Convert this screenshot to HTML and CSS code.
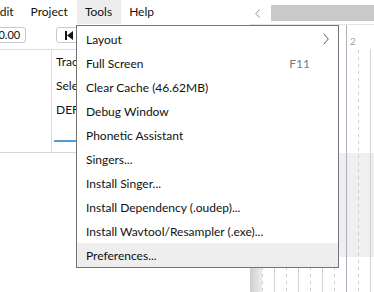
FILE: index.html
```html
<!DOCTYPE html>
<html>
<head>
<meta charset="utf-8">
<link rel="stylesheet" href="styles.css">
</head>
<body>
<div class="window">
  <div class="menubar">
    <div class="mb-items">
      <div class="mb-item first">Edit</div>
      <div class="mb-item">Project</div>
      <div class="mb-item active">Tools</div>
      <div class="mb-item">Help</div>
    </div>
    <div class="hscroll">
      <svg class="hs-arrow" width="5" height="9" viewBox="0 0 5 9"><path d="M4.5 0.5 L0.8 4.5 L4.5 8.5" fill="none" stroke="#8a8a8a" stroke-width="1"/></svg>
      <div class="hs-thumb"></div>
    </div>
  </div>
  <div class="workspace">
    <div class="headers">
      <div class="toolbar">
        <div class="time-input">00:00:00.00</div>
        <div class="tb-btn">
          <svg width="8" height="9" viewBox="0 0 8 9"><rect x="0" y="0" width="2" height="9" fill="#111"/><polygon points="8,0 8,9 2,4.5" fill="#111"/></svg>
        </div>
      </div>
      <div class="track">
        <div class="track-num"></div>
        <div class="track-info">
          <div class="ti-line">Track1</div>
          <div class="ti-line">Select Singer</div>
          <div class="ti-line">DEFAULT</div>
          <div class="ti-slider"></div>
        </div>
      </div>
    </div>
    <div class="canvas">
      <div class="ruler"><span class="bar-label">2</span></div>
      <svg class="rows" width="124" height="243" viewBox="0 0 124 243">
        <defs>
          <linearGradient id="strip" x1="0" x2="1" y1="0" y2="0">
            <stop offset="0" stop-color="#cfcdd2"/>
            <stop offset="1" stop-color="#ececec"/>
          </linearGradient>
        </defs>
        <rect x="0" y="104" width="124" height="104" fill="#efefef"/>
        <g stroke="#d2d2d2" stroke-width="1">
          <line x1="24.5" y1="0" x2="24.5" y2="243"/>
          <line x1="48.5" y1="0" x2="48.5" y2="243"/>
          <line x1="72.5" y1="0" x2="72.5" y2="243"/>
          <line x1="120.5" y1="0" x2="120.5" y2="243"/>
        </g>
        <g stroke="#cdcdcd" stroke-width="1" stroke-dasharray="3 4">
          <line x1="12.5" y1="1" x2="12.5" y2="243"/>
          <line x1="36.5" y1="1" x2="36.5" y2="243"/>
          <line x1="60.5" y1="1" x2="60.5" y2="243"/>
          <line x1="84.5" y1="1" x2="84.5" y2="243"/>
          <line x1="108.5" y1="1" x2="108.5" y2="243"/>
        </g>
        <rect x="0" y="0" width="12" height="243" fill="url(#strip)"/>
        <line x1="96.5" y1="0" x2="96.5" y2="243" stroke="#b7a9c0" stroke-width="1"/>
      </svg>
    </div>
  </div>

  <div class="menu">
    <div class="mi"><span>Layout</span><svg class="chev" width="6" height="12" viewBox="0 0 6 12"><path d="M0.7 0.7 L5.3 6 L0.7 11.3" fill="none" stroke="#5a5a5a" stroke-width="1"/></svg></div>
    <div class="mi"><span>Full Screen</span><span class="shortcut">F11</span></div>
    <div class="mi"><span>Clear Cache (46.62MB)</span></div>
    <div class="mi"><span>Debug Window</span></div>
    <div class="mi"><span>Phonetic Assistant</span></div>
    <div class="mi"><span>Singers...</span></div>
    <div class="mi"><span>Install Singer...</span></div>
    <div class="mi"><span>Install Dependency (.oudep)...</span></div>
    <div class="mi"><span>Install Wavtool/Resampler (.exe)...</span></div>
    <div class="mi hover"><span>Preferences...</span></div>
  </div>
</div>
</body>
</html>
```
FILE: styles.css
```css
* {
  box-sizing: border-box;
  margin: 0;
  padding: 0;
}

html, body {
  width: 374px;
  height: 292px;
  overflow: hidden;
  background: #ffffff;
}

body {
  font-family: "Lato", "Noto Sans", sans-serif;
  font-size: 12px;
  color: #111111;
}

.window {
  position: relative;
  width: 374px;
  height: 292px;
  overflow: hidden;
}

/* menu bar */
.menubar {
  display: flex;
  height: 24px;
}

.mb-items {
  display: flex;
  width: 250px;
  flex: none;
}

.mb-item {
  padding: 0 9px 0 8px;
  line-height: 24px;
  white-space: nowrap;
}

.mb-item.first {
  margin-left: -15px;
}

.mb-item.active {
  background: #ededed;
}

.hscroll {
  flex: 1;
  display: flex;
  align-items: flex-start;
}

.hs-arrow {
  margin: 9px 0 0 5px;
  flex: none;
}

.hs-thumb {
  margin: 5px 0 0 11px;
  height: 16px;
  flex: 1;
  background: #c9c9c9;
}

/* workspace */
.workspace {
  display: flex;
  height: 268px;
}

.headers {
  width: 250px;
  flex: none;
}

.toolbar {
  height: 26px;
  display: flex;
  align-items: flex-start;
  border-bottom: 1px solid #dcdcdc;
}

.time-input {
  margin: 3px 0 0 -40px;
  width: 66px;
  height: 16px;
  border: 1px solid #c9c9c9;
  border-radius: 3px;
  text-align: right;
  padding-right: 6px;
  font-size: 11px;
  line-height: 14px;
  white-space: nowrap;
  overflow: hidden;
  color: #111;
}

.tb-btn {
  margin: 3px 0 0 30px;
  width: 26px;
  height: 16px;
  border: 1px solid #c9c9c9;
  border-radius: 3px;
  display: flex;
  align-items: center;
  padding-left: 8px;
}

.track {
  display: flex;
  height: 103px;
  border-bottom: 1px solid #d6d6d6;
}

.track-num {
  width: 52px;
  border-right: 1px solid #dfdfdf;
}

.track-info {
  flex: 1;
  padding-left: 4px;
  overflow: hidden;
}

.ti-line {
  line-height: 24px;
  white-space: nowrap;
  width: 20px;
  overflow: hidden;
}

.ti-slider {
  margin: 18px 0 0 -2px;
  width: 150px;
  height: 2px;
  background: #48a0e0;
}

/* canvas */
.canvas {
  flex: 1;
  display: flex;
  flex-direction: column;
}

.ruler {
  height: 25px;
  border-top: 1px solid #e4e4e4;
  background: linear-gradient(to right, transparent 96px, #b7a9c0 96px, #b7a9c0 97px, transparent 97px);
}

.bar-label {
  display: block;
  margin: 11px 0 0 100px;
  font-size: 10px;
  line-height: 10px;
  color: #a69dad;
}

.rows {
  display: block;
}

/* dropdown menu (overlay) */
.menu {
  position: absolute;
  left: 76px;
  top: 25px;
  width: 263px;
  height: 243px;
  background: #ffffff;
  border: 1px solid #737373;
  padding-top: 1px;
}

.mi {
  height: 24px;
  display: flex;
  align-items: center;
  justify-content: space-between;
  padding: 0 9px 0 9px;
  white-space: nowrap;
  color: #111111;
}

.mi.hover {
  background: #eeeeee;
}

.shortcut {
  margin-right: 19px;
  color: #7b7b7b;
}

.chev {
  flex: none;
}
```
